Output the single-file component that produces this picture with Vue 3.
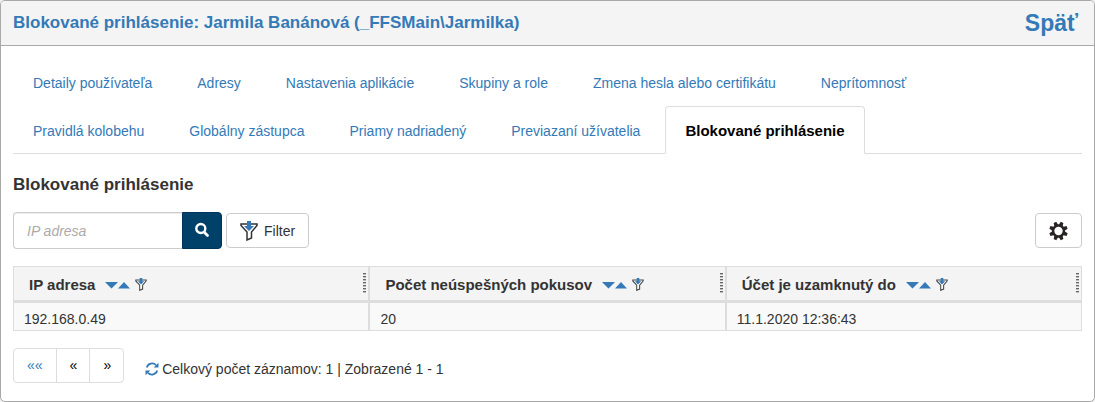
<script setup>
import { ref } from "vue";

const tabs = [
  "Detaily používateľa",
  "Adresy",
  "Nastavenia aplikácie",
  "Skupiny a role",
  "Zmena hesla alebo certifikátu",
  "Neprítomnosť",
  "Pravidlá kolobehu",
  "Globálny zástupca",
  "Priamy nadriadený",
  "Previazaní užívatelia",
  "Blokované prihlásenie",
];
const activeTab = ref("Blokované prihlásenie");

const columns = ["IP adresa", "Počet neúspešných pokusov", "Účet je uzamknutý do"];
const rows = ref([["192.168.0.49", "20", "11.1.2020 12:36:43"]]);

const ipAddress = ref("");
</script>

<template>
  <div class="panel">
    <header class="panel-header">
      <h1>Blokované prihlásenie: Jarmila Banánová (_FFSMain\Jarmilka)</h1>
      <a href="#" class="back">Späť</a>
    </header>

    <main class="panel-body">
      <nav class="tabs">
        <a
          v-for="tab in tabs"
          :key="tab"
          href="#"
          class="tab"
          :class="{ active: tab === activeTab }"
          @click.prevent="activeTab = tab"
        >{{ tab }}</a>
      </nav>

      <h2>Blokované prihlásenie</h2>

      <div class="toolbar">
        <form class="search" @submit.prevent>
          <input v-model="ipAddress" type="text" placeholder="IP adresa" aria-label="IP adresa" />
          <button type="submit" class="search-btn" aria-label="Hľadať">
            <svg width="16" height="16" viewBox="0 0 16 16">
              <circle cx="6.8" cy="6.5" r="4.5" fill="none" stroke="#fff" stroke-width="2.4" />
              <path d="M10.5 10.5l3 3" stroke="#fff" stroke-width="2.8" stroke-linecap="round" />
            </svg>
          </button>
        </form>
        <button type="button" class="btn filter-btn">
          <svg width="18" height="20" viewBox="0 0 18 20">
            <path d="M1 3h16v1.500l-5.500 6.500v6L7 19v-8L1 4.500z" fill="#fff" stroke="#333" stroke-width="1.500" />
            <path d="M7 0h4v5h3L9 10 4 5h3z" fill="#337ab7" />
          </svg>
          <span>Filter</span>
        </button>
        <button type="button" class="btn settings-btn" aria-label="Nastavenia">
          <svg width="20" height="20" viewBox="-10 -10 20 20">
            <g fill="#2a2424">
              <path
                v-for="n in 8"
                :key="n"
                d="M-2.200 -5.500L-1.500 -9.800H1.500L2.200 -5.500z"
                :transform="`rotate(${n * 45 + 22.5})`"
              />
            </g>
            <circle r="5.700" fill="none" stroke="#2a2424" stroke-width="2.600" />
          </svg>
        </button>
      </div>

      <table>
        <thead>
          <tr>
            <th v-for="column in columns" :key="column">
              <div class="th-content">
                <span>{{ column }}</span>
                <svg class="sort" width="25" height="8" viewBox="0 0 25 8">
                  <path d="M0 1h13L6.500 7.500z M13 7.500h12L19 1z" fill="#337ab7" />
                </svg>
                <svg width="12" height="13" viewBox="0 0 18 20">
                  <path d="M1 3h16v1.500l-5.500 6.500v6L7 19v-8L1 4.500z" fill="#fff" stroke="#444" stroke-width="1.600" />
                  <path d="M7 0h4v5h3L9 10 4 5h3z" fill="#337ab7" />
                </svg>
                <span class="grip"></span>
              </div>
            </th>
          </tr>
        </thead>
        <tbody>
          <tr v-for="(row, index) in rows" :key="index">
            <td v-for="cell in row" :key="cell">{{ cell }}</td>
          </tr>
        </tbody>
      </table>

      <footer class="footer">
        <div class="pager">
          <a href="#" class="first">««</a>
          <a href="#">«</a>
          <a href="#">»</a>
        </div>
        <div class="summary">
          <svg width="14" height="14" viewBox="0 0 14 14">
            <path d="M1.800 5.500A5.400 5.400 0 0 1 11 3.200M12.200 8.500A5.400 5.400 0 0 1 3 10.800" fill="none" stroke="#337ab7" stroke-width="1.700" />
            <path d="M13.500 .8v4.800H8.700zM.5 13.200V8.400h4.800z" fill="#337ab7" />
          </svg>
          <span>Celkový počet záznamov: 1 | Zobrazené 1 - 1</span>
        </div>
      </footer>
    </main>
  </div>
</template>

<style>
body {
  background: #eee;
}
</style>

<style scoped>
* {
  box-sizing: border-box;
}
.panel {
  border: 1px solid #a9a9a9;
  border-radius: 5px;
  background: #fff;
  color: #333;
  font-family: "Liberation Sans", Arial, sans-serif;
  font-size: 14px;
  line-height: 20px;
  overflow: hidden;
}
.panel-header {
  display: flex;
  justify-content: space-between;
  align-items: center;
  height: 45px;
  padding: 0 16px 0 12px;
  background: #f4f4f4;
  border-bottom: 1px solid #a9a9a9;
}
h1,
h2 {
  margin: 0;
  font-size: 17px;
  line-height: 20px;
}
h1 {
  color: #337ab7;
}
a {
  color: #337ab7;
  text-decoration: none;
}
.back {
  font-size: 23px;
  font-weight: bold;
}
.panel-body {
  padding: 12px 12px 18px;
}
.tabs {
  display: flex;
  flex-wrap: wrap;
  row-gap: 1px;
  border-bottom: 1px solid #ddd;
}
.tab {
  height: 48px;
  margin: 0 5px -1px 0;
  padding: 14px 19px 12px;
  border: 1px solid transparent;
  border-radius: 4px 4px 0 0;
}
.tab.active {
  background: #fff;
  border-color: #ddd;
  border-bottom-color: #fff;
  color: #000;
  font-size: 15px;
  font-weight: bold;
}
h2 {
  margin: 21px 0 17px;
}
.toolbar {
  display: flex;
  align-items: center;
  gap: 4px;
}
.search {
  display: flex;
}
.search input {
  width: 169px;
  height: 37px;
  padding: 0 13px;
  border: 1px solid #ccc;
  border-right: 0;
  border-radius: 4px 0 0 4px;
  box-shadow: inset 0 1px 1px rgba(0, 0, 0, 0.075);
  font: inherit;
  outline: none;
}
.search input::placeholder {
  color: #aaa;
  font-style: italic;
}
button {
  display: flex;
  align-items: center;
  justify-content: center;
  font: inherit;
  cursor: pointer;
}
.search-btn {
  width: 40px;
  padding: 0 0 2px;
  border: 1px solid #00345a;
  border-radius: 0 4px 4px 0;
  background: #004169;
}
.btn {
  height: 35px;
  padding: 0 13px;
  border: 1px solid #ccc;
  border-radius: 4px;
  background: #fff;
  color: #333;
}
.filter-btn {
  gap: 6px;
}
.settings-btn {
  width: 47px;
  margin-left: auto;
}
table {
  width: 100%;
  margin-top: 17px;
  table-layout: fixed;
  border-collapse: separate;
  border-spacing: 0;
  border: 1px solid #ddd;
}
th,
td {
  text-align: left;
  border-right: 2px solid #ddd;
}
th:last-child,
td:last-child {
  border-right: 0;
}
th {
  width: 33.4%;
  height: 36px;
  padding: 2px 2px 0 15px;
  background: #f4f4f4;
  border-bottom: 3px solid #ddd;
  font-size: 15px;
}
th:last-child {
  width: auto;
}
td {
  height: 27px;
  padding: 6px 10px 1px;
  background: #f9f9f9;
}
.th-content {
  display: flex;
  align-items: center;
}
.sort {
  margin: 0 5px 0 10px;
}
.grip {
  width: 3px;
  height: 20px;
  margin: -4px 0 0 auto;
  background: repeating-linear-gradient(#666 0 1px, #bbb 1px 2px, transparent 2px 3px);
}
.footer {
  display: flex;
  align-items: center;
  gap: 21px;
  margin-top: 17px;
}
.pager {
  display: flex;
  border: 1px solid #ddd;
  border-radius: 4px;
}
.pager a {
  padding: 6px 13px 7px;
  color: #000;
}
.pager a + a {
  padding-right: 12px;
  border-left: 1px solid #ddd;
}
.pager .first {
  color: #337ab7;
}
.summary {
  display: flex;
  align-items: center;
  gap: 3px;
  padding-top: 7px;
}
</style>
